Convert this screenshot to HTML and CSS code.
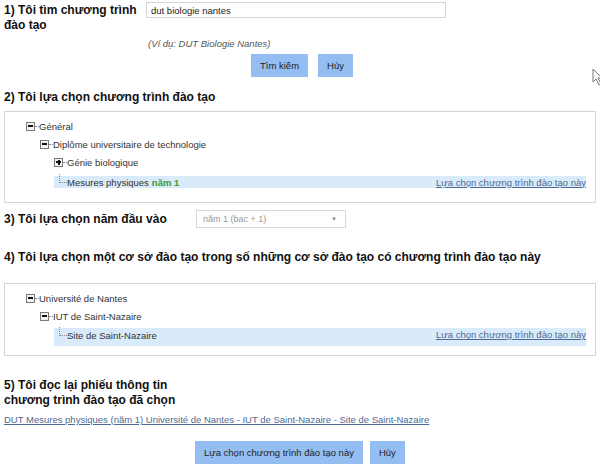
FILE: index.html
```html
<!DOCTYPE html>
<html lang="vi">
<head>
    <meta charset="UTF-8">
    <title>Lựa chọn chương trình đào tạo</title>
    <link rel="stylesheet" href="styles.css">
</head>
<body>
    <div class="step step-search">
        <h3 class="step-title narrow">1) Tôi tìm chương trình đào tạo</h3>
        <div class="search-form">
            <input type="text" class="search-input" value="dut biologie nantes">
            <p class="hint">(Ví dụ: DUT Biologie Nantes)</p>
            <div class="buttons">
                <button class="btn">Tìm kiếm</button>
                <button class="btn">Hủy</button>
            </div>
        </div>
    </div>

    <h3 class="step-title title-2">2) Tôi lựa chọn chương trình đào tạo</h3>
    <div class="tree-box box-2">
        <ul class="tree">
            <li><div class="node"><span class="toggle minus"></span><span class="dash"></span>Général</div>
                <ul>
                    <li><div class="node"><span class="toggle minus"></span><span class="dash"></span>Diplôme universitaire de technologie</div>
                        <ul>
                            <li><div class="node"><span class="toggle plus"></span><span class="dash"></span>Génie biologique</div></li>
                            <li class="selected"><div class="node leaf"><span class="elbow"></span>Mesures physiques <b class="year">năm 1</b></div>
                                <a href="#" class="pick">Lựa chọn chương trình đào tạo này</a></li>
                        </ul>
                    </li>
                </ul>
            </li>
        </ul>
    </div>

    <div class="step step-year">
        <h3 class="step-title year-title">3) Tôi lựa chọn năm đầu vào</h3>
        <div class="select">năm 1 (bac + 1)<span class="arrow">▼</span></div>
    </div>

    <h3 class="step-title title-4">4) Tôi lựa chọn một cơ sở đào tạo trong số những cơ sở đào tạo có chương trình đào tạo này</h3>
    <div class="tree-box box-4">
        <ul class="tree">
            <li><div class="node"><span class="toggle minus"></span><span class="dash"></span>Université de Nantes</div>
                <ul>
                    <li><div class="node"><span class="toggle minus"></span><span class="dash"></span>IUT de Saint-Nazaire</div>
                        <ul>
                            <li class="selected tall"><div class="node leaf"><span class="elbow"></span>Site de Saint-Nazaire</div>
                                <a href="#" class="pick">Lựa chọn chương trình đào tạo này</a></li>
                        </ul>
                    </li>
                </ul>
            </li>
        </ul>
    </div>

    <h3 class="step-title title-5">5) Tôi đọc lại phiếu thông tin<br>chương trình đào tạo đã chọn</h3>
    <a href="#" class="summary">DUT Mesures physiques (năm 1) Université de Nantes - IUT de Saint-Nazaire - Site de Saint-Nazaire</a>
    <div class="buttons final">
        <button class="btn">Lựa chọn chương trình đào tạo này</button>
        <button class="btn">Hủy</button>
    </div>

    <svg class="cursor" width="12" height="18" viewBox="0 0 12 18">
        <path d="M1 1 L1 14 L4 11 L7 17 L9 16 L6 10 L10 10 Z" fill="#fff" stroke="#777" stroke-width="1"/>
    </svg>
</body>
</html>
```

FILE: styles.css
```css
body {
    margin: 0;
    padding: 0 4px;
    font-family: "Liberation Sans", Arial, sans-serif;
    font-size: 9.5px;
    color: #333;
    background: #fff;
}
.step-title {
    margin: 0;
    font-size: 12px;
    font-weight: bold;
    color: #111;
    line-height: 15px;
}
.step-search {
    display: flex;
    padding-top: 3px;
}
.narrow {
    width: 142px;
}
.search-form {
    display: flex;
    flex-direction: column;
    margin-top: -1px;
}
.search-input {
    width: 300px;
    height: 16px;
    box-sizing: border-box;
    margin: 0;
    padding: 0 4px;
    border: 1px solid #d6d6d6;
    font-family: "Liberation Sans", Arial, sans-serif;
    font-size: 9.5px;
    color: #222;
}
.hint {
    margin: 20px 0 0 2px;
    font-style: italic;
    color: #555;
    line-height: 12px;
}
.buttons {
    display: flex;
    gap: 10px;
    padding-left: 105px;
    margin-top: 4px;
}
.btn {
    height: 23px;
    padding: 0 9px;
    border: none;
    background: #94bef2;
    color: #222;
    font-family: "Liberation Sans", Arial, sans-serif;
    font-size: 9.5px;
    cursor: pointer;
}
.title-2 {
    margin-top: 13px;
}
.tree-box {
    border: 1px solid #d4d4d4;
    padding: 5px 9px 14px 0;
}
.box-2 {
    margin-top: 6px;
}
.box-4 {
    margin-top: 18px;
    padding-bottom: 9px;
}
.tree, .tree ul {
    list-style: none;
    margin: 0;
    padding: 0;
}
.tree {
    padding-left: 21px;
}
.tree ul {
    padding-left: 14px;
}
.node {
    display: flex;
    align-items: center;
    height: 18px;
    color: #333;
}
.toggle {
    position: relative;
    width: 9px;
    height: 9px;
    box-sizing: border-box;
    border: 1px solid #7a7a7a;
    background: #f4f4f4;
}
.toggle::before {
    content: "";
    position: absolute;
    left: 1px;
    top: 2.5px;
    width: 5px;
    height: 2px;
    background: #111;
}
.plus::after {
    content: "";
    position: absolute;
    left: 2.5px;
    top: 1px;
    width: 2px;
    height: 5px;
    background: #111;
}
.dash {
    width: 4px;
    border-top: 1px dotted #888;
}
.selected {
    display: flex;
    justify-content: space-between;
    align-items: center;
    height: 12px;
    margin-top: 5px;
    background: #d9eafa;
}
.selected .node {
    height: 12px;
    padding-left: 5px;
}
.selected.tall {
    height: 18px;
    margin-top: 3px;
    align-items: flex-start;
    padding-top: 1px;
    box-sizing: border-box;
}
.elbow {
    width: 7px;
    height: 8px;
    margin-top: -8px;
    border-left: 1px dotted #888;
    border-bottom: 1px dotted #888;
}
.year {
    margin-left: 3px;
    color: #3d9a2d;
}
.pick {
    color: #4d6a92;
}
.step-year {
    display: flex;
    align-items: center;
    margin-top: 7px;
}
.year-title {
    width: 192px;
}
.select {
    display: flex;
    justify-content: space-between;
    align-items: center;
    width: 150px;
    height: 18px;
    box-sizing: border-box;
    padding: 0 8px 0 6px;
    border: 1px solid #d8d8d8;
    color: #999;
    font-size: 9px;
}
.arrow {
    font-size: 6px;
    color: #888;
}
.title-4 {
    margin-top: 22px;
}
.title-5 {
    margin-top: 22px;
}
.summary {
    display: block;
    margin-top: 6px;
    line-height: 12px;
    color: #4d6a92;
}
.final {
    padding-left: 191px;
    margin-top: 15px;
    gap: 7px;
}
.cursor {
    position: absolute;
    left: 592px;
    top: 68px;
}
```
